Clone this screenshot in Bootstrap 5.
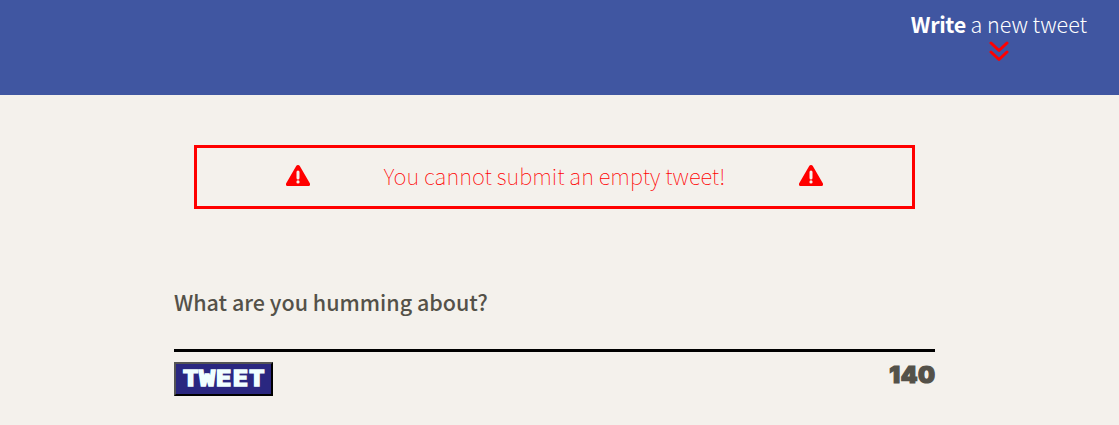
<!DOCTYPE html>
<html lang="en">
<head>
<meta charset="utf-8">
<meta name="viewport" content="width=device-width, initial-scale=1">
<title>Tweeter</title>
<link rel="stylesheet" href="https://cdn.jsdelivr.net/npm/bootstrap@5.3.0/dist/css/bootstrap.min.css">
<style>
body{background:#f4f1ec;color:#545149;font-family:"Source Sans Pro","Noto Sans CJK JP",sans-serif;font-size:22px;line-height:30px;overflow:hidden}
.top-nav{background:#4056a1;height:95px;padding:9px 32px 0 0}
.write-link{color:#fff;font-size:21.5px;font-weight:300;letter-spacing:-.03px;white-space:nowrap}
.write-link strong{font-weight:700;letter-spacing:-.35px}
.write-link svg{margin-top:1px}
.composer{width:761px;margin-left:174px;padding-top:50px}
.error-box{border:3px solid red;color:red;height:64px;margin:0 20px 78px;padding:0 89px 4px;font-weight:100}
.error-box p{white-space:nowrap}
.error-box svg{margin-top:1px}
.prompt{font-size:21.5px;font-weight:500;display:block;height:62px}
.rule{border-bottom:3px solid #000;margin-bottom:10px}
.tweet-btn{background:#2a2780;color:#f0ffff;border:2px outset #000;border-color:#545454 #000 #000 #545454;width:99px;height:34px}
.block-type{font-family:"DejaVu Sans Mono",monospace;font-size:22px;font-weight:700;line-height:26px;-webkit-text-stroke:1.700px currentColor;display:inline-block;white-space:nowrap;transform:scaleX(1.18);letter-spacing:.8px;margin-right:-.8px}
.counter{font-family:Inter,sans-serif;font-size:23px;font-weight:900;-webkit-text-stroke-width:1.200px;transform:scaleX(1.04);transform-origin:right;letter-spacing:.6px;margin-right:-.5px;line-height:27px}
</style>
</head>
<body>
<nav class="top-nav d-flex justify-content-end">
  <div class="write-link d-flex flex-column align-items-center">
    <span><strong>Write</strong> a new tweet</span>
    <svg width="20" height="22" viewBox="0 0 20 22" fill="none" stroke="red" stroke-width="3" stroke-linecap="round" stroke-linejoin="round"><path d="M2 3 10 10.500l8-7.500M2 12 10 19.500l8-7.500"/></svg>
  </div>
</nav>
<main class="composer">
  <div class="error-box d-flex align-items-center justify-content-between">
    <svg width="24" height="22" viewBox="0 0 24 22"><path fill="red" fill-rule="evenodd" d="M12 0c.8 0 1.400.4 1.800 1l10 17.300c.8 1.400 0 2.700-1.500 2.700H1.700C.2 21-.6 19.700.2 18.300L10.200 1c.4-.6 1-1 1.800-1Zm-1.500 7v6a1.500 1.500 0 0 0 3 0V7a1.500 1.500 0 0 0-3 0ZM12 15.300a1.600 1.600 0 1 0 0 3.200 1.600 1.600 0 0 0 0-3.200Z"/></svg>
    <p class="m-0">You cannot submit an empty tweet!</p>
    <svg width="24" height="22" viewBox="0 0 24 22"><path fill="red" fill-rule="evenodd" d="M12 0c.8 0 1.400.4 1.800 1l10 17.300c.8 1.400 0 2.700-1.500 2.700H1.700C.2 21-.6 19.700.2 18.300L10.200 1c.4-.6 1-1 1.800-1Zm-1.500 7v6a1.500 1.500 0 0 0 3 0V7a1.500 1.500 0 0 0-3 0ZM12 15.300a1.600 1.600 0 1 0 0 3.200 1.600 1.600 0 0 0 0-3.200Z"/></svg>
  </div>
  <form>
    <label class="prompt">What are you humming about?</label>
    <div class="rule"></div>
    <div class="d-flex justify-content-between">
      <button type="button" class="tweet-btn p-0 d-flex align-items-center justify-content-center"><span class="block-type">TWEET</span></button>
      <output class="block-type counter p-0">140</output>
    </div>
  </form>
</main>
<script src="https://cdn.jsdelivr.net/npm/bootstrap@5.3.0/dist/js/bootstrap.bundle.min.js"></script>
</body>
</html>
